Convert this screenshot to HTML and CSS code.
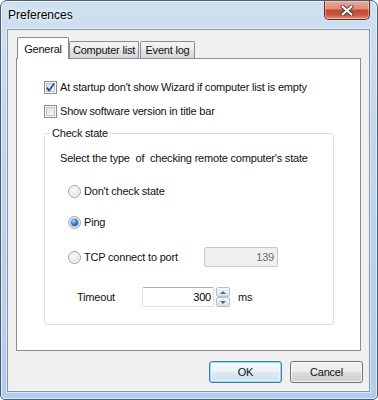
FILE: index.html
```html
<!DOCTYPE html>
<html>
<head>
<meta charset="utf-8">
<link rel="stylesheet" href="styles.css">
</head>
<body>
<div class="window">
  <div class="titlebar">
    <span class="title">Preferences</span>
    <div class="close">
      <svg width="14" height="11" viewBox="0 0 14 11">
        <path d="M2.5 1.5 L11.5 9.5 M11.5 1.5 L2.5 9.5" stroke="#3a3a3a" stroke-width="4" stroke-linecap="round" fill="none"/>
        <path d="M2.5 1.5 L11.5 9.5 M11.5 1.5 L2.5 9.5" stroke="#ffffff" stroke-width="2.2" stroke-linecap="round" fill="none"/>
      </svg>
    </div>
  </div>
  <div class="client">
    <div class="tabs">
      <div class="tab tab-active">General</div>
      <div class="tab tab-computers">Computer list</div>
      <div class="tab tab-events">Event log</div>
    </div>
    <div class="panel">
      <div class="check-row">
        <span class="checkbox">
          <svg width="11" height="11" viewBox="0 0 11 11"><path d="M1.8 5.6 L4.2 8.6 L9.2 1.6" stroke="#2c4a8f" stroke-width="1.7" fill="none" stroke-linejoin="round"/></svg>
        </span>
        <span>At startup don't show Wizard if computer list is empty</span>
      </div>
      <div class="check-row row-2">
        <span class="checkbox"></span>
        <span>Show software version in title bar</span>
      </div>
      <fieldset class="group">
        <legend>Check state</legend>
        <div class="group-desc">Select the type  of  checking remote computer's state</div>
        <div class="radio-row radio-first">
          <span class="radio"></span>
          <span>Don't check state</span>
        </div>
        <div class="radio-row radio-second">
          <span class="radio"><span class="dot"></span></span>
          <span>Ping</span>
        </div>
        <div class="radio-row tcp-row">
          <span class="radio"></span>
          <span class="tcp-label">TCP connect to port</span>
          <span class="edit edit-disabled">139</span>
        </div>
        <div class="timeout-row">
          <span class="timeout-label">Timeout</span>
          <span class="edit edit-value">300</span>
          <span class="spinner">
            <span class="spin-btn"><span class="arrow-up"></span></span>
            <span class="spin-btn"><span class="arrow-down"></span></span>
          </span>
          <span class="unit">ms</span>
        </div>
      </fieldset>
    </div>
    <div class="buttons">
      <button class="btn btn-default">OK</button>
      <button class="btn">Cancel</button>
    </div>
  </div>
</div>
</body>
</html>
```
FILE: styles.css
```css
* { box-sizing: border-box; }
html, body { margin: 0; padding: 0; }
body {
  width: 378px;
  height: 400px;
  overflow: hidden;
  background: #ffffff;
  font-family: "Liberation Sans", Arial, sans-serif;
  font-size: 11px;
  letter-spacing: -0.2px;
  color: #111;
}

.window {
  width: 378px;
  height: 400px;
  border: 1px solid #4d5d70;
  border-radius: 7px 7px 5px 5px;
  background: linear-gradient(180deg, #cfe0f1 0%, #c3d7ed 30%, #b9d0ea 70%, #b1cceb 100%);
  box-shadow: inset 0 0 0 1px rgba(255, 255, 255, 0.6);
  padding: 0 7px 7px 6px;
  display: flex;
  flex-direction: column;
}

.titlebar {
  height: 28px;
  display: flex;
  align-items: center;
  justify-content: space-between;
  padding-left: 1px;
}
.title {
  font-size: 12px;
  letter-spacing: 0;
  color: #000;
  text-shadow: 0 0 5px #fff, 0 0 8px #fff;
}
.close {
  align-self: flex-start;
  width: 46px;
  height: 19px;
  border: 1px solid #6e2b20;
  border-top: none;
  border-radius: 0 0 5px 5px;
  background: linear-gradient(180deg, #eaa899 0%, #df8c79 42%, #c9472f 52%, #cb573f 78%, #e39a84 100%);
  box-shadow: inset 0 0 0 1px rgba(255, 255, 255, 0.35);
  display: flex;
  align-items: center;
  justify-content: center;
}

.client {
  flex: 1;
  background: #f0f0f0;
  border: 1px solid #8396ae;
  box-shadow: 0 0 0 1px rgba(255, 255, 255, 0.5);
  padding: 7px 6px 0 8px;
  display: flex;
  flex-direction: column;
}

.tabs {
  display: flex;
  align-items: flex-end;
  height: 21px;
  margin-left: 1px;
}
.tab {
  height: 17px;
  border: 1px solid #898c95;
  border-bottom: none;
  border-radius: 2px 2px 0 0;
  background: linear-gradient(180deg, #f4f4f4 0%, #ececec 50%, #e2e2e2 50%, #d8d8d8 100%);
  display: flex;
  align-items: center;
  justify-content: center;
  white-space: nowrap;
}
.tab-active {
  width: 52px;
  height: 22px;
  margin-bottom: -1px;
  background: #ffffff;
  position: relative;
  z-index: 1;
}
.tab-computers { width: 70px; }
.tab-events { width: 55px; margin-left: 1px; }

.panel {
  width: 345px;
  height: 293px;
  border: 1px solid #898c95;
  background: #ffffff;
  padding: 22px 0 0 27px;
}

.check-row {
  display: flex;
  align-items: center;
  height: 13px;
  line-height: 13px;
  gap: 3px;
  white-space: nowrap;
}
.row-2 { margin-top: 11px; }

.checkbox {
  width: 13px;
  height: 13px;
  border: 1px solid #8e8f8f;
  background: linear-gradient(135deg, #d4d7db 0%, #eceef0 55%, #fbfbfb 100%);
  box-shadow: inset 0 0 0 1px #f6f6f6, inset 0 0 0 2px #c3c7cc;
  display: flex;
  align-items: center;
  justify-content: center;
  flex: none;
}

.group {
  width: 290px;
  margin: 9px 0 0 0;
  padding: 0 0 17px 5px;
  border: 1px solid #d5dfe5;
  border-radius: 3px;
  min-width: 0;
}
.group legend {
  padding: 0 2px;
  margin: 0;
  line-height: 13px;
}
.group-desc {
  margin: 12px 0 0 10px;
  line-height: 13px;
  height: 13px;
  white-space: pre;
}

.radio-row {
  display: flex;
  align-items: center;
  height: 13px;
  line-height: 13px;
  gap: 3px;
  margin-left: 18px;
  white-space: nowrap;
}
.radio-first { margin-top: 20px; }
.radio-second { margin-top: 18px; }
.tcp-row { margin-top: 18px; height: 20px; }

.radio {
  width: 13px;
  height: 13px;
  border-radius: 50%;
  border: 1px solid #a2a2a2;
  background: radial-gradient(circle at 45% 40%, #fdfdfd 0%, #ececec 45%, #d2d2d2 100%);
  box-shadow: inset 0 0 0 1px #f8f8f8;
  display: flex;
  align-items: center;
  justify-content: center;
  flex: none;
}
.dot {
  width: 7px;
  height: 7px;
  border-radius: 50%;
  background: radial-gradient(circle at 38% 32%, #a9dcfc 0%, #2f80cf 45%, #0f3f86 100%);
  box-shadow: 0 0 0 1px rgba(30, 70, 130, 0.35);
}

.tcp-label { width: 117px; }

.edit {
  height: 20px;
  border-radius: 2px;
  text-align: right;
  line-height: 18px;
  display: block;
  flex: none;
}
.edit-disabled {
  width: 74px;
  border: 1px solid #c9c9c9;
  background: #f0f0f0;
  color: #6d6d6d;
  padding-right: 3px;
}

.timeout-row {
  display: flex;
  align-items: center;
  height: 20px;
  margin: 20px 0 0 27px;
  white-space: nowrap;
}
.timeout-label { width: 65px; }
.edit-value {
  width: 72px;
  border: 1px solid #dbdfe6;
  border-top-color: #abadb3;
  background: #ffffff;
  color: #000;
  padding-right: 2px;
}
.spinner {
  display: flex;
  flex-direction: column;
  width: 14px;
  height: 20px;
  margin-left: 2px;
}
.spin-btn {
  height: 10px;
  border: 1px solid #b6c3d3;
  border-radius: 2px;
  background: linear-gradient(180deg, #f6f8fb 0%, #e6ebf1 50%, #d8dfe8 100%);
  display: flex;
  align-items: center;
  justify-content: center;
}
.arrow-up {
  width: 0;
  height: 0;
  border-left: 3px solid transparent;
  border-right: 3px solid transparent;
  border-bottom: 3px solid #4b6a99;
}
.arrow-down {
  width: 0;
  height: 0;
  border-left: 3px solid transparent;
  border-right: 3px solid transparent;
  border-top: 3px solid #4b6a99;
}
.unit { margin-left: 8px; }

.buttons {
  display: flex;
  justify-content: flex-end;
  gap: 8px;
  margin-top: 10px;
}
.btn {
  width: 73px;
  height: 22px;
  border: 1px solid #707070;
  border-radius: 3px;
  background: linear-gradient(180deg, #f2f2f2 0%, #ebebeb 50%, #dddddd 50%, #cfcfcf 100%);
  box-shadow: inset 0 0 0 1px rgba(255, 255, 255, 0.85);
  font-family: "Liberation Sans", Arial, sans-serif;
  font-size: 11px;
  letter-spacing: -0.2px;
  color: #111;
  padding: 0;
}
.btn-default {
  border-color: #3c7fb1;
  background: linear-gradient(180deg, #f4f9fc 0%, #eaf3f9 50%, #dde9f2 50%, #d0e1ee 100%);
  box-shadow: inset 0 0 0 1px #8fd9f8, inset 0 0 0 2px rgba(255, 255, 255, 0.6);
}
```
